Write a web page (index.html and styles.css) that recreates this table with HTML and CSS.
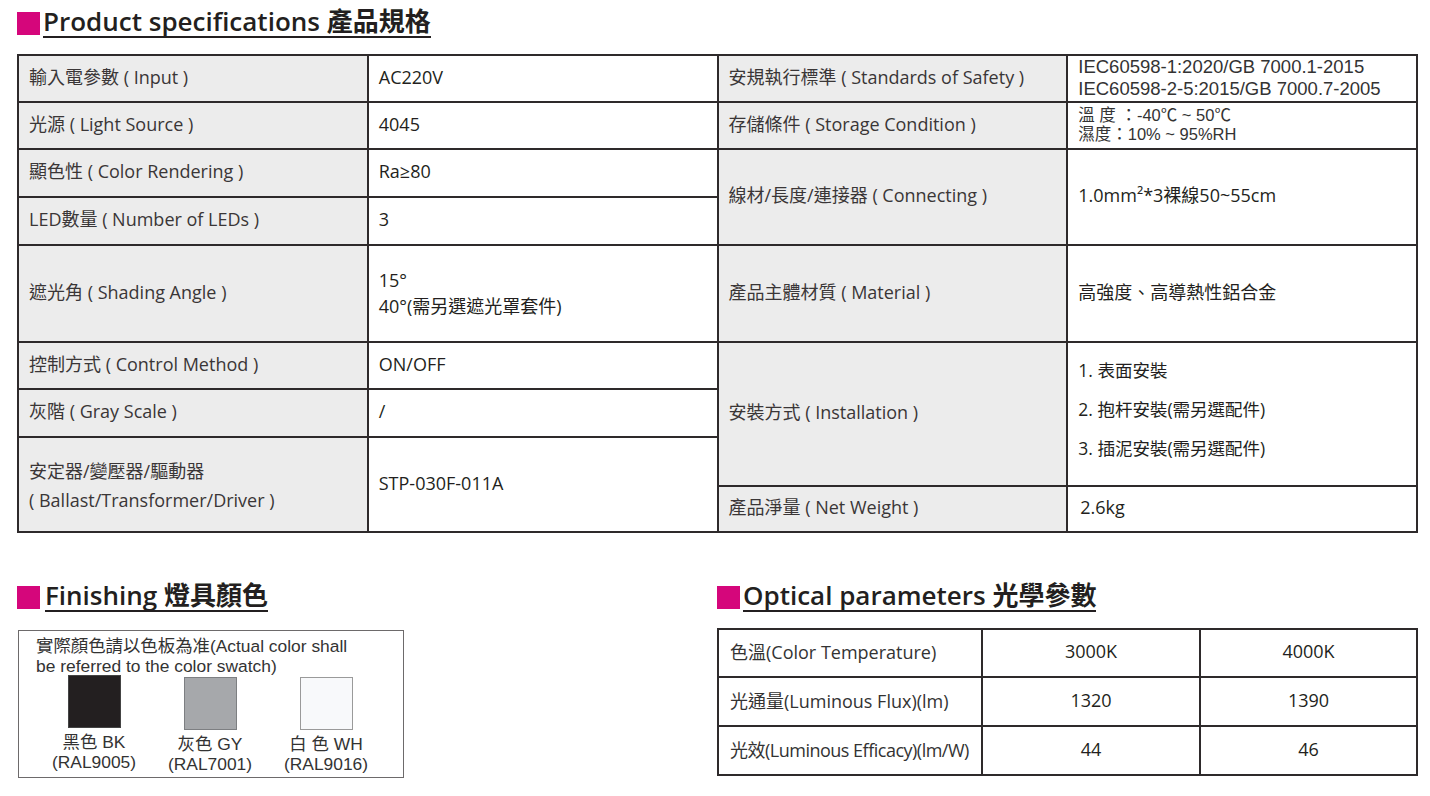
FILE: index.html
```html
<!DOCTYPE html>
<html lang="zh-Hant">
<head>
<meta charset="utf-8">
<title>Product specifications</title>
<link rel="stylesheet" href="styles.css">
</head>
<body>
<div class="page">
  <h2 class="sec-title"><span class="mark"></span><span class="txt">Product specifications 產品規格</span></h2>

  <div class="spec">
    <div class="cell label">輸入電參數 ( Input )</div>
    <div class="cell value">AC220V</div>
    <div class="cell label">安規執行標準 ( Standards of Safety )</div>
    <div class="cell value tight">IEC60598-1:2020/GB 7000.1-2015<br>IEC60598-2-5:2015/GB 7000.7-2005</div>

    <div class="cell label">光源 ( Light Source )</div>
    <div class="cell value">4045</div>
    <div class="cell label">存儲條件 ( Storage Condition )</div>
    <div class="cell value tighter">溫 度 ：-40℃ ~ 50℃<br>濕度：10% ~ 95%RH</div>

    <div class="cell label">顯色性 ( Color Rendering )</div>
    <div class="cell value">Ra≥80</div>
    <div class="cell label span2">線材/長度/連接器 ( Connecting )</div>
    <div class="cell value span2">1.0mm²*3裸線50~55cm</div>

    <div class="cell label">LED數量 ( Number of LEDs )</div>
    <div class="cell value">3</div>

    <div class="cell label">遮光角 ( Shading Angle )</div>
    <div class="cell value loose">15°<br>40°(需另選遮光罩套件)</div>
    <div class="cell label">產品主體材質 ( Material )</div>
    <div class="cell value">高強度、高導熱性鋁合金</div>

    <div class="cell label">控制方式 ( Control Method )</div>
    <div class="cell value">ON/OFF</div>
    <div class="cell label span3">安裝方式 ( Installation )</div>
    <div class="cell value span3 list">
      <ol class="steps">
        <li>1. 表面安裝</li>
        <li>2. 抱杆安裝(需另選配件)</li>
        <li>3. 插泥安裝(需另選配件)</li>
      </ol>
    </div>

    <div class="cell label">灰階 ( Gray Scale )</div>
    <div class="cell value">/</div>

    <div class="cell label span2 two">安定器/變壓器/驅動器<br>( Ballast/Transformer/Driver )</div>
    <div class="cell value span2">STP-030F-011A</div>

    <div class="cell label">產品淨量 ( Net Weight )</div>
    <div class="cell value pad2">2.6kg</div>
  </div>

  <div class="bottom">
    <section class="finish">
      <h2 class="sec-title"><span class="mark"></span><span class="txt">Finishing 燈具顏色</span></h2>
      <div class="finish-box">
        <p class="note">實際顏色請以色板為准(Actual color shall<br>be referred to the color swatch)</p>
        <div class="swatches">
          <div class="sw">
            <div class="chip black"></div>
            <div class="sw-label">黑色 BK<br>(RAL9005)</div>
          </div>
          <div class="sw">
            <div class="chip gray"></div>
            <div class="sw-label">灰色 GY<br>(RAL7001)</div>
          </div>
          <div class="sw">
            <div class="chip white"></div>
            <div class="sw-label">白 色 WH<br>(RAL9016)</div>
          </div>
        </div>
      </div>
    </section>

    <section class="optical">
      <h2 class="sec-title"><span class="mark"></span><span class="txt">Optical parameters 光學參數</span></h2>
      <div class="opt">
        <div class="ocell first">色溫(Color Temperature)</div>
        <div class="ocell num">3000K</div>
        <div class="ocell num">4000K</div>
        <div class="ocell first">光通量(Luminous Flux)(lm)</div>
        <div class="ocell num">1320</div>
        <div class="ocell num">1390</div>
        <div class="ocell first condensed">光效(Luminous Efficacy)(lm/W)</div>
        <div class="ocell num">44</div>
        <div class="ocell num">46</div>
      </div>
    </section>
  </div>
</div>
</body>
</html>
```

FILE: styles.css
```css
* { box-sizing: border-box; }

html, body {
  margin: 0;
  padding: 0;
  background: #ffffff;
}

body {
  font-family: "Open Sans", "Noto Sans CJK TC", sans-serif;
  color: #231f20;
}

.page {
  width: 1430px;
  padding: 6px 12px 0 17px;
}

/* section titles */
.sec-title {
  margin: 0;
  display: flex;
  align-items: flex-end;
  font-size: 26px;
  font-weight: 600;
  line-height: 30px;
  color: #231f20;
}

.mark {
  width: 23px;
  height: 23px;
  background: #d5067b;
  margin: 0 3px 3px 0;
  flex: none;
}

.finish .mark { margin-right: 5px; }

.txt {
  border-bottom: 2px solid #231f20;
  white-space: nowrap;
}

/* main spec table */
.spec {
  margin-top: 16px;
  width: 1401px;
  display: grid;
  grid-template-columns: repeat(4, 1fr);
  grid-template-rows: 45px 45px 46px 46px 95px 45px 46px 47px 44px;
  gap: 2px;
  padding: 2px;
  background: #2e2a2b;
  font-size: 18px;
}

.cell {
  display: flex;
  align-items: center;
  padding: 0 10px 4px 10px;
  line-height: 22px;
}

.label {
  background: #ececec;
  color: #3a3637;
}

.value {
  background: #ffffff;
  color: #231f20;
}

.span2 { grid-row: span 2; }
.span3 { grid-row: span 3; }

.tight {
  font-family: "Liberation Sans", "Noto Sans CJK TC", sans-serif;
  font-size: 18.5px;
  line-height: 21.5px;
  padding-bottom: 2px;
  color: #333;
}

.tighter {
  font-family: "Liberation Sans", "Noto Sans CJK TC", sans-serif;
  font-size: 16.5px;
  line-height: 19px;
  padding-bottom: 2px;
  color: #333;
}

.loose { line-height: 26px; padding-bottom: 2px; }
.two { line-height: 29px; padding-top: 2px; padding-bottom: 0; }
.pad2 { padding-left: 12px; }
.list { padding-bottom: 10px; }

.steps {
  list-style: none;
  margin: 0;
  padding: 0;
  font-size: 17.5px;
  line-height: 22px;
  display: flex;
  flex-direction: column;
  gap: 17px;
}

/* bottom area */
.bottom {
  display: flex;
  margin-top: 47px;
}

.finish {
  width: 700px;
  flex: none;
}

.optical {
  flex: 1;
}

.finish-box {
  margin-top: 18px;
  margin-left: 1px;
  width: 386px;
  height: 148px;
  border: 1px solid #6d6a6b;
  padding: 5px 0 0 17px;
  font-family: "Liberation Sans", "Noto Sans CJK TC", sans-serif;
}

.note {
  margin: 0;
  height: 39px;
  font-size: 17.4px;
  line-height: 20px;
  color: #333;
}

.swatches {
  display: flex;
}

.sw {
  width: 116px;
  display: flex;
  flex-direction: column;
  align-items: center;
}

.chip {
  width: 53px;
  height: 53px;
}

.chip.black { background: #231f20; border: 1px solid #444; }
.chip.gray { background: #a6a8ab; border: 1px solid #7d7f82; margin-top: 2px; }
.chip.white { background: #f8f9fb; border: 1px solid #9a9a9a; margin-top: 2px; }

.sw-label {
  margin-top: 4px;
  text-align: center;
  font-size: 17.4px;
  line-height: 20px;
  color: #333;
}

/* optical table */
.opt {
  margin-top: 16px;
  width: 701px;
  display: grid;
  grid-template-columns: 262px 216px 1fr;
  grid-template-rows: 46px 47px 47px;
  gap: 2px;
  padding: 2px;
  background: #2e2a2b;
  font-size: 18px;
}

.ocell {
  background: #ffffff;
  display: flex;
  align-items: center;
  padding-bottom: 4px;
  color: #231f20;
  white-space: nowrap;
}

.ocell.first {
  padding-left: 11px;
  color: #333;
}

.ocell.condensed {
  letter-spacing: -0.5px;
}

.ocell.num {
  justify-content: center;
}
```
